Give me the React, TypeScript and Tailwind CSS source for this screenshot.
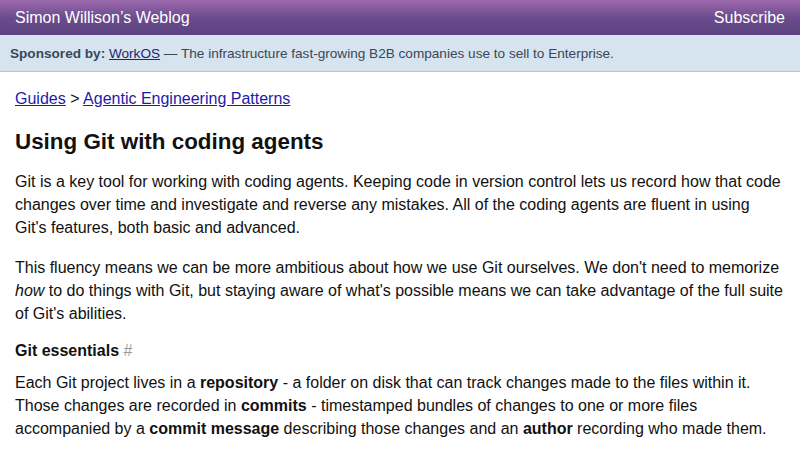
export default function App() {
  return (
    <div className="min-h-screen bg-white font-['Liberation_Sans',Arial,sans-serif] text-[#111]">
      {/* Header */}
      <header className="h-[35px] flex items-center justify-between px-[15px] bg-gradient-to-b from-[#9d69ad] via-[#6b4c8e] to-[#5c4280] text-white text-base">
        <span>Simon Willison’s Weblog</span>
        <span>Subscribe</span>
      </header>

      {/* Sponsor */}
      <div className="h-[37px] flex items-center px-[10px] bg-[#d6e4ef] border-b border-[#b9c6d1] text-[13.6px] text-[#3a4757]">
        <span className="pt-[2px]">
          <b>Sponsored by:</b>{' '}
          <a className="text-[#1e2470] underline">WorkOS</a> — The infrastructure fast-growing B2B companies use to sell to Enterprise.
        </span>
      </div>

      {/* Content */}
      <main className="px-[15px] pt-[15px] text-base leading-[23px]">
        <p>
          <a className="text-[#1f1aa8] underline">Guides</a> &gt;{' '}
          <a className="text-[#1f1aa8] underline">Agentic Engineering Patterns</a>
        </p>

        <h1 className="mt-[17px] text-[22.4px] leading-[29px] font-bold">Using Git with coding agents</h1>

        <p className="mt-[14px]">
          Git is a key tool for working with coding agents. Keeping code in version control lets us record how that code changes over time and investigate and reverse any mistakes. All of the coding agents are fluent in using Git's features, both basic and advanced.
        </p>

        <p className="mt-[17px]">
          This fluency means we can be more ambitious about how we use Git ourselves. We don't need to memorize <i>how</i> to do things with Git, but staying aware of what's possible means we can take advantage of the full suite of Git's abilities.
        </p>

        <h3 className="mt-[14px] font-bold">
          Git essentials <span className="font-normal text-[#999]">#</span>
        </h3>

        <p className="mt-[9px]">
          Each Git project lives in a <b>repository</b> - a folder on disk that can track changes made to the files within it. Those changes are recorded in <b>commits</b> - timestamped bundles of changes to one or more files accompanied by a <b>commit message</b> describing those changes and an <b>author</b> recording who made them.
        </p>
      </main>
    </div>
  )
}
